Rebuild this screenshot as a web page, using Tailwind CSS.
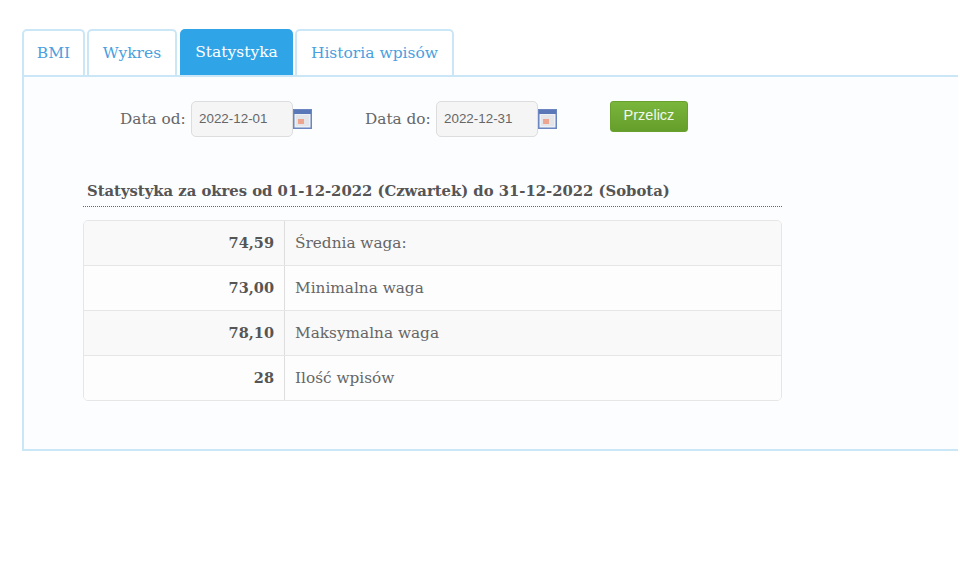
<!DOCTYPE html>
<html lang="pl">
<head>
<meta charset="utf-8">
<script src="https://cdn.jsdelivr.net/npm/@tailwindcss/browser@4"></script>
</head>
<body class="bg-white overflow-hidden font-['DejaVu_Serif',serif] text-[#555]">
<div class="w-[958px] h-[580px] pl-[22px] pt-[29px] overflow-hidden">
  <div class="flex h-[46px] text-[15.5px] text-[#4a9fe0]">
    <div class="w-[63px] pt-[1px] border-2 border-b-0 border-[#cbe7f7] rounded-t-[5px] bg-white flex items-center justify-center">BMI</div>
    <div class="w-[90px] pt-[1px] ml-[2px] border-2 border-b-0 border-[#cbe7f7] rounded-t-[5px] bg-white flex items-center justify-center">Wykres</div>
    <div class="w-[113px] pt-[1px] ml-[3px] rounded-t-[5px] bg-[#2fa4e7] text-white flex items-center justify-center">Statystyka</div>
    <div class="w-[159px] pt-[1px] ml-[2px] border-2 border-b-0 border-[#cbe7f7] rounded-t-[5px] bg-white flex items-center justify-center">Historia wpisów</div>
  </div>
  <div class="w-[960px] h-[376px] border-2 border-[#cbe7f7] bg-[#fcfdff] pl-[59px]">
    <div class="h-[60px] flex items-start pt-[24px] text-[15.3px] text-[#666]">
      <div class="ml-[37px] flex items-center h-[36px]">
        <span class="w-[71px] whitespace-nowrap">Data od:</span>
        <div class="w-[102px] h-[36px] border border-[#ddd] rounded-[5px] bg-[#f5f5f5] flex items-center pl-[7px] font-['Liberation_Sans',sans-serif] text-[13.4px]">2022-12-01</div>
        <svg class="w-[19px] h-[20px]" viewBox="0 0 19 20"><rect x=".75" y=".75" width="17.5" height="18.5" fill="#eceff4" stroke="#6b86c0" stroke-width="1.5"/><rect x="1" y="1" width="17" height="4" fill="#5a78b8"/><rect x="3" y="6" width="13" height="11" fill="#e4e5e8"/><rect x="5" y="10" width="6" height="5" fill="#eda58f"/></svg>
      </div>
      <div class="ml-[53px] flex items-center h-[36px]">
        <span class="w-[71px] whitespace-nowrap">Data do:</span>
        <div class="w-[102px] h-[36px] border border-[#ddd] rounded-[5px] bg-[#f5f5f5] flex items-center pl-[7px] font-['Liberation_Sans',sans-serif] text-[13.4px]">2022-12-31</div>
        <svg class="w-[19px] h-[20px]" viewBox="0 0 19 20"><rect x=".75" y=".75" width="17.5" height="18.5" fill="#eceff4" stroke="#6b86c0" stroke-width="1.5"/><rect x="1" y="1" width="17" height="4" fill="#5a78b8"/><rect x="3" y="6" width="13" height="11" fill="#e4e5e8"/><rect x="5" y="10" width="6" height="5" fill="#eda58f"/></svg>
      </div>
      <div class="ml-[53px] w-[78px] h-[31px] rounded-[3px] border border-[#6aa02e] bg-gradient-to-b from-[#7ab53c] to-[#659f2b] text-white/90 font-['Liberation_Sans',sans-serif] text-[14.5px] flex items-center justify-center pb-[2px]">Przelicz</div>
    </div>
    <div class="w-[699px] h-[70px] pl-[4px] pt-[43px] text-[14.8px] font-bold text-[#555] border-b border-dotted border-[#666] leading-[22px] whitespace-nowrap">Statystyka za okres od 01-12-2022 (Czwartek) do 31-12-2022 (Sobota)</div>
    <div class="mt-[13px] w-[699px] border border-[#e6e6e6] rounded-[5px] overflow-hidden text-[15.3px] text-[#666]">
      <div class="flex h-[44px] bg-[#f9f9f9]"><div class="w-[201px] flex items-center justify-end pr-[10px] text-[14.5px] font-bold text-[#555] border-r border-[#ddd]">74,59</div><div class="flex items-center pl-[10px]">Średnia waga:</div></div>
      <div class="flex h-[45px] border-t border-[#e6e6e6] bg-[#fdfdfe]"><div class="w-[201px] flex items-center justify-end pr-[10px] text-[14.5px] font-bold text-[#555] border-r border-[#ddd]">73,00</div><div class="flex items-center pl-[10px]">Minimalna waga</div></div>
      <div class="flex h-[45px] border-t border-[#e6e6e6] bg-[#f9f9f9]"><div class="w-[201px] flex items-center justify-end pr-[10px] text-[14.5px] font-bold text-[#555] border-r border-[#ddd]">78,10</div><div class="flex items-center pl-[10px]">Maksymalna waga</div></div>
      <div class="flex h-[45px] border-t border-[#e6e6e6] bg-[#fdfdfe]"><div class="w-[201px] flex items-center justify-end pr-[10px] text-[14.5px] font-bold text-[#555] border-r border-[#ddd]">28</div><div class="flex items-center pl-[10px]">Ilość wpisów</div></div>
    </div>
  </div>
</div>
</body>
</html>
